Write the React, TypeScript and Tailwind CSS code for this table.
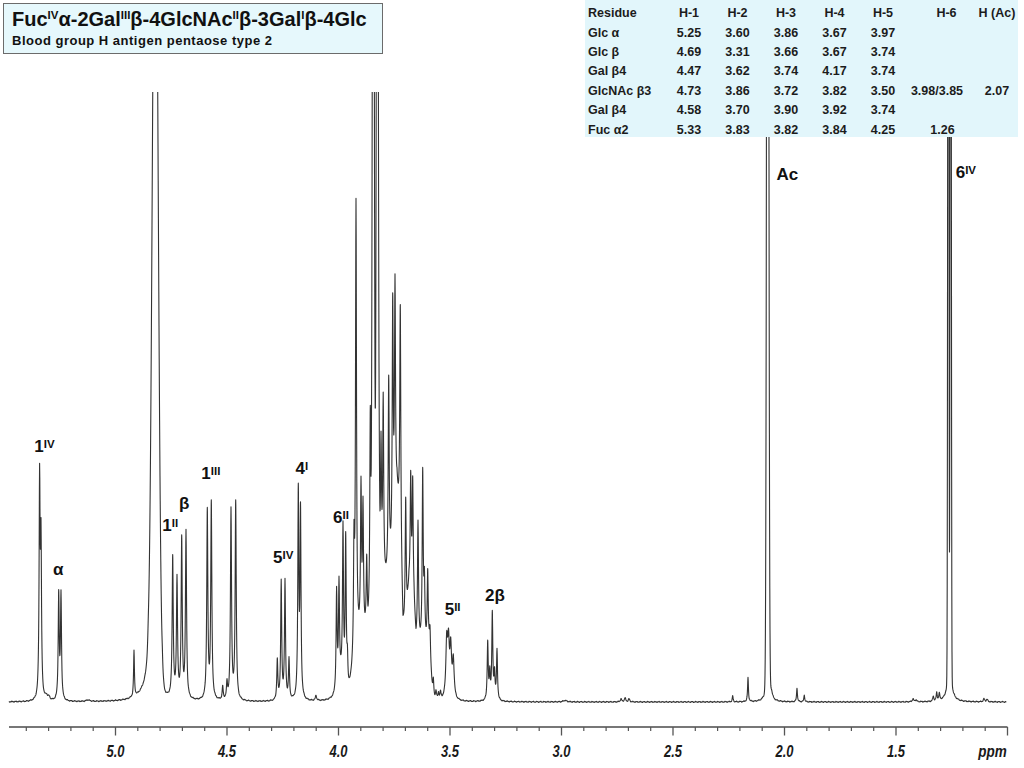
import { useMemo } from "react";

type Peak = { x: number; h: number; w: number; g?: boolean };

// lorentzian / gaussian line, all in screen pixels
const L = (x: number, h: number, w = 0.6): Peak => ({ x, h, w });
const G = (x: number, h: number, w: number): Peak => ({ x, h, w, g: true });

const BASE = 702;
const X0 = 9;
const X1 = 1006.5;
const AXIS_Y = 727;

const ppmX = (ppm: number) => 115.5 + (5.0 - ppm) * 223;

const PEAKS: Peak[] = [
  // Fuc H-1
  L(39.6, 215), L(41.0, 150), L(46.5, 4, 1.5), L(49, 3, 1.2),
  // Glc alpha H-1
  L(58.7, 105), L(61.0, 105), L(88, 1.5, 2),
  L(134, 46, 0.5),
  // HOD
  G(155.3, 855, 2.8), L(151, 50, 6), L(148.3, 6, 0.5), L(162.3, 6, 0.6),
  // 1II, beta
  L(172.7, 140, 0.65), L(177, 118, 0.65), L(181.7, 158, 0.65), L(186, 166, 0.65),
  // 1III
  L(207.3, 188, 0.65), L(211.3, 196, 0.65),
  L(222.7, 13), L(227, 16),
  // Gal b4 H-1
  L(231, 190, 0.65), L(235.7, 198, 0.65),
  // 5IV
  L(277.3, 40), L(281.2, 118), L(285, 118), L(289, 40),
  // 4I
  L(298.3, 205), L(300.5, 185),
  L(316, 5, 0.8),
  // 6II
  L(336.6, 100), L(339, 100), L(343, 155), L(345.7, 150), L(347.4, 30), L(341, 20, 3),
  // ring protons
  L(354, 109), L(356, 445), L(361, 147), L(363, 125), L(366.7, 70), L(370.3, 195),
  G(373.3, 1000, 0.9), G(377.3, 1000, 0.9),
  L(379.3, 50), L(381, 135), L(383.2, 180), L(388.7, 190),
  L(392.7, 242), L(395, 232), L(400.3, 229),
  L(405.7, 128), L(410.7, 113), L(412.7, 117),
  L(418, 120), L(422.7, 170), L(424.4, 60), L(427.7, 75), L(430, 30), L(433.3, 20),
  L(436, 8), L(438.5, 6), L(440.5, 7),
  // 5II
  L(446.7, 55, 1), L(448.5, 50, 1), L(450.7, 48, 1), L(453.3, 38, 1),
  // 2beta
  L(487.7, 58), L(489.8, 26), L(492.3, 86), L(494.5, 26), L(497, 50),
  // small stuff
  L(565, 1.5, 2), L(621, 3, 0.8), L(625, 4, 0.8), L(629, 3, 0.8),
  L(732.7, 6, 0.5), L(748, 24, 0.5),
  // Ac
  G(767.7, 1500, 0.9), L(767.7, 22, 2.5), L(771.5, 6, 1.2),
  L(797, 14, 0.5), L(804.3, 7, 0.5),
  L(913, 3, 0.8), L(916, 2, 0.8),
  L(933.3, 5, 0.6), L(936.7, 8, 0.6), L(939.3, 7, 0.6),
  // Fuc H-6
  G(948.3, 1500, 0.47), G(950.7, 1500, 0.47), L(949.5, 35, 2.5),
  L(984, 3, 0.8), L(987, 2.5, 0.8),
];

const ENVELOPE: [number, number][] = [
  [348, 0], [352, 20], [358, 55], [368, 65], [372, 110], [386, 115], [392, 135],
  [397, 200], [400, 170], [403, 65], [406, 70], [409, 110], [414, 90], [416, 55],
  [429, 50], [433, 0],
];

function envelope(x: number) {
  if (x <= ENVELOPE[0][0] || x >= ENVELOPE[ENVELOPE.length - 1][0]) return 0;
  for (let i = 1; i < ENVELOPE.length; i++) {
    const [xa, ya] = ENVELOPE[i - 1];
    const [xb, yb] = ENVELOPE[i];
    if (x <= xb) return ya + ((x - xa) / (xb - xa)) * (yb - ya);
  }
  return 0;
}

function buildPath() {
  const xs: number[] = [];
  for (let x = X0; x <= X1; x += 0.2) xs.push(x);
  PEAKS.forEach((p) => xs.push(p.x));
  xs.sort((a, b) => a - b);

  let d = "";
  for (const x of xs) {
    let h = envelope(x) + 0.35 * Math.sin(x * 1.7) + 0.25 * Math.sin(x * 4.3 + 1);
    for (const p of PEAKS) {
      const dx = x - p.x;
      if (p.g) h += p.h * Math.exp(-(dx * dx) / (2 * p.w * p.w));
      else h += (p.h * p.w * p.w) / (dx * dx + p.w * p.w);
    }
    d += (d ? "L" : "M") + x.toFixed(2) + " " + (BASE - h).toFixed(2);
  }
  return d;
}

type Label = { x: number; y: number; main: string; sup?: string };

const LABELS: Label[] = [
  { x: 34.3, y: 452, main: "1", sup: "IV" },
  { x: 53, y: 575, main: "α" },
  { x: 162.3, y: 531, main: "1", sup: "II" },
  { x: 179, y: 509, main: "β" },
  { x: 201.3, y: 479, main: "1", sup: "III" },
  { x: 273, y: 563, main: "5", sup: "IV" },
  { x: 295.5, y: 474, main: "4", sup: "I" },
  { x: 333, y: 523, main: "6", sup: "II" },
  { x: 444.7, y: 615, main: "5", sup: "II" },
  { x: 485, y: 601, main: "2β" },
  { x: 776.5, y: 180, main: "Ac" },
  { x: 955.7, y: 178, main: "6", sup: "IV" },
];

const ROWS: string[][] = [
  ["Glc α", "5.25", "3.60", "3.86", "3.67", "3.97", "", ""],
  ["Glc β", "4.69", "3.31", "3.66", "3.67", "3.74", "", ""],
  ["Gal β4", "4.47", "3.62", "3.74", "4.17", "3.74", "", ""],
  ["GlcNAc β3", "4.73", "3.86", "3.72", "3.82", "3.50", "3.98/3.85", "2.07"],
  ["Gal β4", "4.58", "3.70", "3.90", "3.92", "3.74", "", ""],
  ["Fuc α2", "5.33", "3.83", "3.82", "3.84", "4.25", "1.26", ""],
];

const HEAD = ["Residue", "H-1", "H-2", "H-3", "H-4", "H-5", "H-6", "H (Ac)"];

const COLS = "grid grid-cols-[77px_48px_49px_48px_49px_48px_71px_38px] h-[19.4px] items-center whitespace-nowrap";

function ShiftTable() {
  return (
    <div className="absolute left-[585px] top-0 w-[433px] h-[137px] overflow-hidden bg-[#e2f6fb] pl-[3px] pt-[4px] text-[12.5px] font-bold text-[#1c1c1c]">
      <div className={COLS}>
        {HEAD.map((h, i) => (
          <div key={h} className={i === 0 ? "" : i === 6 ? "text-center pl-[8px]" : "text-center"}>
            {h}
          </div>
        ))}
      </div>
      {ROWS.map((row, r) => (
        <div key={r} className={COLS}>
          {row.map((c, i) => (
            <div
              key={i}
              className={
                i === 0 ? "" : i === 6 && c.length > 4 ? "text-center pr-[11px]" : "text-center"
              }
            >
              {c}
            </div>
          ))}
        </div>
      ))}
    </div>
  );
}

function TitleBox() {
  return (
    <div className="absolute left-[3px] top-[3px] w-[380px] h-[51px] border-[1.5px] border-[#6b6b6b] bg-[#e6f8fc] px-[8px] font-bold text-[#111]">
      <div className="text-[20px] leading-[22px] mt-[4px] whitespace-nowrap">
        Fuc<sup className="text-[11.5px] -top-[7px]">IV</sup>α-2Gal
        <sup className="text-[11.5px] -top-[7px]">III</sup>β-4GlcNAc
        <sup className="text-[11.5px] -top-[7px]">II</sup>β-3Gal
        <sup className="text-[11.5px] -top-[7px]">I</sup>β-4Glc
      </div>
      <div className="text-[13px] leading-[15px] mt-[3px] tracking-[0.5px] whitespace-nowrap">
        Blood group H antigen pentaose type 2
      </div>
    </div>
  );
}

export default function App() {
  const path = useMemo(buildPath, []);

  const minor: number[] = [];
  for (let k = 54; k >= 11; k--) if (k % 5 !== 0) minor.push(k / 10);
  const major = [5.0, 4.5, 4.0, 3.5, 3.0, 2.5, 2.0, 1.5];

  return (
    <div className="relative w-[1024px] h-[768px] overflow-hidden bg-white font-['Liberation_Sans',Arial,sans-serif]">
      <svg width={1024} height={768} viewBox="0 0 1024 768" className="block">
        <defs>
          <clipPath id="plot">
            <rect x={0} y={92} width={1024} height={640} />
          </clipPath>
        </defs>
        <path d={path} fill="none" stroke="#333" strokeWidth={1.1} strokeLinejoin="round" clipPath="url(#plot)" />

        {/* axis */}
        <line x1={X0} y1={AXIS_Y} x2={1007.5} y2={AXIS_Y} stroke="#4a4a4a" strokeWidth={1.6} />
        {minor.map((p) => (
          <line key={p} x1={ppmX(p)} y1={AXIS_Y} x2={ppmX(p)} y2={AXIS_Y + 4} stroke="#555" strokeWidth={1.2} />
        ))}
        {[...major, 1.0].map((p) => (
          <line key={"M" + p} x1={ppmX(p)} y1={AXIS_Y} x2={ppmX(p)} y2={AXIS_Y + 8.5} stroke="#555" strokeWidth={1.3} />
        ))}
        <g fontFamily="Liberation Sans, Arial, sans-serif" fontWeight="bold" fontStyle="italic" fontSize={16.5} fill="#1a1a1a">
          {major.map((p) => (
            <text key={p} x={ppmX(p)} y={757} textAnchor="middle" textLength={18} lengthAdjust="spacingAndGlyphs">
              {p.toFixed(1)}
            </text>
          ))}
          <text x={1006.7} y={757} textAnchor="end" textLength={28.5} lengthAdjust="spacingAndGlyphs">
            ppm
          </text>
        </g>

        {/* peak labels */}
        <g fontFamily="Liberation Sans, Arial, sans-serif" fontWeight="bold" fontSize={17} fill="#111">
          {LABELS.map((l) => (
            <text key={l.x} x={l.x} y={l.y}>
              {l.main}
              {l.sup && (
                <tspan fontSize={11.5} dy={-4}>
                  {l.sup}
                </tspan>
              )}
            </text>
          ))}
        </g>
      </svg>

      <TitleBox />
      <ShiftTable />
    </div>
  );
}
